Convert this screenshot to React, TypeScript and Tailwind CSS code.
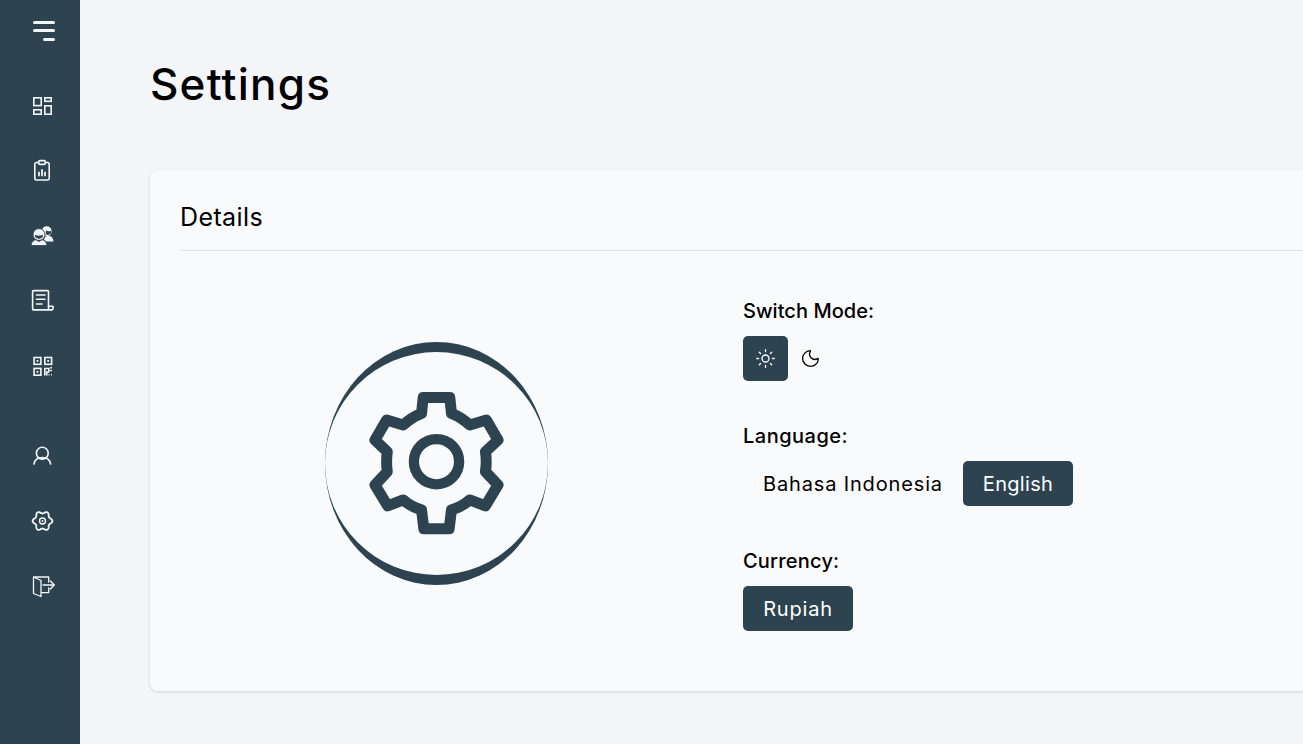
import { Sun, Moon } from "lucide-react";
import type { ReactNode } from "react";

const s = { fill: "none", stroke: "currentColor", strokeWidth: 1.6, strokeLinecap: "round" as const, strokeLinejoin: "round" as const };

function Ico({ children, viewBox = "0 0 24 24" }: { children: ReactNode; viewBox?: string }) {
  return <svg width="24" height="24" viewBox={viewBox} className="overflow-visible" {...s}>{children}</svg>;
}

function lobed() {
  const pts: string[] = [];
  for (let i = 0; i < 120; i++) {
    const t = (i / 120) * Math.PI * 2;
    const r = 8.7 + 1.2 * Math.cos(6 * t);
    pts.push(`${(12 + r * Math.cos(t)).toFixed(2)} ${(12 + r * Math.sin(t)).toFixed(2)}`);
  }
  return `M${pts.join("L")}Z`;
}

const icons = [
  <Ico key="a">
    <rect x="3.800" y="4.800" width="7.400" height="7.800" strokeLinejoin="miter" />
    <rect x="14.800" y="4.800" width="6.400" height="3.500" strokeLinejoin="miter" />
    <rect x="3.800" y="16.800" width="7.400" height="4.400" strokeLinejoin="miter" />
    <rect x="14.800" y="12.800" width="6.400" height="8.400" strokeLinejoin="miter" />
  </Ico>,
  <Ico key="b">
    <path d="M8.500 4.500H6.500a1.700 1.700 0 0 0-1.700 1.700v14.100A1.700 1.700 0 0 0 6.500 22h11a1.700 1.700 0 0 0 1.700-1.700V6.200A1.700 1.700 0 0 0 17.500 4.500h-2" />
    <rect x="8.500" y="2.600" width="7" height="3.800" rx="1.800" />
    <path d="M9 17.500v-3M12 17.500v-5.500M15 17.500v-3" strokeWidth="1.800" />
  </Ico>,
  <svg key="c" width="24" height="24" viewBox="0 0 24 24" fill="currentColor">
    <circle cx="16.700" cy="8.200" r="5" />
    <path d="M14 16.500c1-2.800 2-3.500 3-3.500h2c2.500 0 4 1.800 4.500 5.500h-7z" />
    <circle cx="9" cy="11.500" r="6" stroke="#2d4450" strokeWidth="1" />
    <path d="M1 22.500c.5-3.500 2.300-5.300 4.800-5.700L9 18.500l3.200-1.700c2.500.4 4.300 2.200 4.800 5.700z" stroke="#2d4450" strokeWidth=".8" />
    <path d="M4.800 11.500c1.500 1.500 6.900 1.500 8.400 0l-.7 3L9 16l-3.500-1.500z" fill="#2d4450" />
    <path d="M16 7.500c1.500 1 4.500 1 5.500 0l-.5 3-3 1.500-2-.5z" fill="#2d4450" />
  </svg>,
  <Ico key="d">
    <path d="M18.500 20.500V3.600a1 1 0 0 0-1-1H3.600a1 1 0 0 0-1 1v17.300a1 1 0 0 0 1 1H21.500" />
    <path d="M21.500 21.900a1.500 1.500 0 0 0 1.500-1.500v-2.200h-4.500" />
    <path d="M6.500 7h8.500M6.500 11.300h8.500M6.500 16h5.500" />
  </Ico>,
  <svg key="e" width="24" height="24" viewBox="0 0 24 24" fill="none" stroke="currentColor" strokeWidth="1.600">
    <rect x="4.100" y="4.500" width="6.800" height="6.800" />
    <rect x="14.800" y="4.500" width="6.800" height="6.800" />
    <rect x="4.100" y="15.400" width="6.800" height="6.800" />
    <rect x="6.600" y="7" width="1.800" height="1.800" fill="currentColor" stroke="none" />
    <rect x="17.300" y="7" width="1.800" height="1.800" fill="currentColor" stroke="none" />
    <rect x="6.600" y="17.900" width="1.800" height="1.800" fill="currentColor" stroke="none" />
    <path d="M14.800 22.500v-7h4v3.500h-2v3.500M20.200 14.700h1.800M20.200 17.500h1.800M18.500 21.800h1M21 21.800h1" />
  </svg>,
  <Ico key="f">
    <circle cx="12.300" cy="9.200" r="5.900" />
    <path d="M4 20c.7-4 3.500-6.500 8.300-6.500s7.600 2.500 8.300 6.500" />
  </Ico>,
  <svg key="g" width="24" height="24" viewBox="-0.500 0 24 24" fill="none" stroke="currentColor" strokeWidth="1.800">
    <path d={lobed()} strokeLinejoin="round" />
    <circle cx="12" cy="12" r="3" strokeWidth="1.400" />
    <circle cx="12" cy="12" r="0.900" fill="currentColor" stroke="none" />
  </svg>,
  <Ico key="h" viewBox="-0.500 0 24 24">
    <path d="M3 3h15.200v5M18.200 14v4.700H10.500M3 3l7.500 3.500v16L3 19.500z" strokeWidth="1.300" />
    <path d="M12.500 11h11M19.800 7l4 4-4 4" strokeWidth="1.400" />
  </Ico>,
];

function NavItem({ children }: { children: ReactNode }) {
  return <div className="h-[65px] pl-[4px] flex items-center justify-center text-[#f4f5f7]">{children}</div>;
}

function Label({ children, className }: { children: ReactNode; className: string }) {
  return <div className={`h-[25px] flex items-center text-[20px] font-medium text-black leading-none mb-[13px] ${className}`}>{children}</div>;
}

export default function App() {
  return (
    <div className="flex h-[744px] w-full overflow-hidden bg-[#f3f5f9] font-['Inter','Noto_Sans',sans-serif]">
      <aside className="w-20 shrink-0 bg-[#2d4450] flex flex-col">
        <div className="h-[72px] pt-[21px] pl-[8px] flex justify-center">
          <div className="w-[22px] flex flex-col items-end gap-[5.300px]">
            <div className="h-[3px] w-[22px] rounded-full bg-[#f4f5f7]" />
            <div className="h-[3px] w-[22px] rounded-full bg-[#f4f5f7]" />
            <div className="h-[3px] w-[12px] rounded-full bg-[#f4f5f7]" />
          </div>
        </div>
        {icons.slice(0, 5).map((ic, i) => <NavItem key={i}>{ic}</NavItem>)}
        <div className="h-[26px]" />
        {icons.slice(5).map((ic, i) => <NavItem key={i}>{ic}</NavItem>)}
      </aside>
      <main className="flex-1 min-w-0 pl-[70px] pt-[54px]">
        <h1 className="h-[60px] flex items-center text-[44px] tracking-[1.200px] font-medium text-black leading-none">Settings</h1>
        <section className="mt-[56px] w-[1300px] h-[521px] rounded-lg bg-[#f9fafc] px-[30px] shadow-[0_1px_3px_rgba(0,0,0,0.15)]">
          <div className="h-[81px] pt-[29px] border-b border-[#e3e5e8] text-[25px] tracking-[0.400px] leading-[36px] text-black">
            Details
          </div>
          <div className="flex pt-[47px]">
            <div className="w-[513px] flex justify-center pt-[44px]">
              <div className="w-[223px] h-[243px] rounded-[50%] border-y-[10px] border-[#2d4450] flex items-center justify-center">
                <svg width="153" height="159" viewBox="150 162 460 477" className="block">
                  <path d="M340 202H420L425 250Q455 262 480 285L530 270L565 330L527 365Q532 395 527 425L565 465L527 528L480 510Q455 532 425 540L418 597H342L335 540Q305 532 280 510L233 528L195 465L232 425Q228 395 232 365L195 330L230 270L280 285Q305 262 335 250Z" fill="none" stroke="#2d4450" strokeWidth="33" strokeLinejoin="round" />
                  <circle cx="380" cy="395" r="68" fill="none" stroke="#2d4450" strokeWidth="31" />
                </svg>
              </div>
            </div>
            <div className="ml-[50px] flex flex-col">
              <Label className="tracking-[0.050px]">Switch Mode:</Label>
              <div className="flex items-center h-[45px] mb-[42px]">
                <div className="w-[45px] h-[45px] rounded-[5px] bg-[#2d4450] text-white flex items-center justify-center">
                  <Sun size={21} strokeWidth={1.500} />
                </div>
                <div className="w-[45px] h-[45px] text-black flex items-center justify-center">
                  <Moon size={21} strokeWidth={1.500} />
                </div>
              </div>
              <Label className="tracking-[0.500px]">Language:</Label>
              <div className="flex h-[45px] mb-[42px]">
                <div className="w-[220px] h-[45px] pl-5 flex items-center text-[20px] tracking-[0.850px] text-black">Bahasa Indonesia</div>
                <div className="w-[110px] h-[45px] flex items-center justify-center rounded-[5px] bg-[#2d4450] text-white text-[20px] tracking-[0.300px]">English</div>
              </div>
              <Label className="tracking-[0.200px]">Currency:</Label>
              <div className="flex h-[45px]">
                <div className="w-[110px] h-[45px] flex items-center justify-center rounded-[5px] bg-[#2d4450] text-white text-[20px] tracking-[0.800px]">Rupiah</div>
              </div>
            </div>
          </div>
        </section>
      </main>
    </div>
  );
}
